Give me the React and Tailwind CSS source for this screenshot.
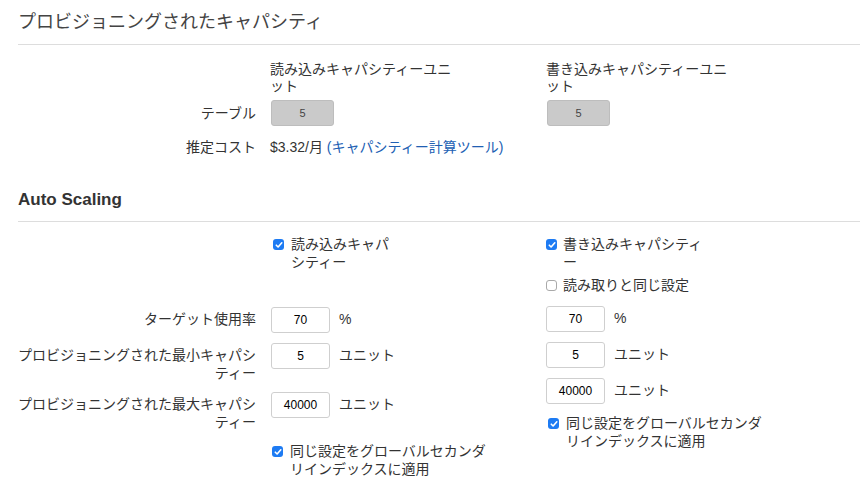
import React from 'react';

const font = { fontFamily: '"Liberation Sans", "Noto Sans CJK JP", sans-serif' };

function Check({ checked }) {
  return checked ? (
    <span className="mt-[4px] flex h-[11px] w-[11px] shrink-0 items-center justify-center rounded-[3px] bg-[#1d7bf3]">
      <svg width="8" height="8" viewBox="0 0 8 8" fill="none">
        <path d="M1.3 4.2 3.1 6 6.8 1.8" stroke="#fff" strokeWidth="1.6" strokeLinecap="round" strokeLinejoin="round" />
      </svg>
    </span>
  ) : (
    <span className="mt-[4px] h-[11px] w-[11px] shrink-0 rounded-[3px] border border-[#a9a9a9] bg-white" />
  );
}

function CheckRow({ checked, width, gap = 'gap-[7px]', children }) {
  return (
    <div className={`flex items-start ${gap}`}>
      <Check checked={checked} />
      <span className={`${width} leading-[18px]`}>{children}</span>
    </div>
  );
}

function NumInput({ value }) {
  return (
    <div className="flex h-[26px] w-[59px] items-center justify-center rounded-[3px] border border-[#cfcfcf] bg-white text-[12px] text-black">
      {value}
    </div>
  );
}

function DisabledInput({ value }) {
  return (
    <div className="flex h-[26px] w-[63px] items-center justify-center rounded-[3px] border border-[#bdbdbd] bg-[#cacaca] text-[11px] text-[#444]">
      {value}
    </div>
  );
}

function Label({ children }) {
  return <div className="w-[238px] shrink-0 pt-[3px] text-right leading-[18px]">{children}</div>;
}

export default function App() {
  return (
    <div className="min-h-[486px] bg-white pl-[18px] pr-[4px] text-[14px] text-[#333]" style={font}>
      {/* Provisioned capacity */}
      <h2 className="border-b border-[#dddddd] pt-[10px] pb-[10px] text-[18px] leading-[24px] text-[#444]">
        プロビジョニングされたキャパシティ
      </h2>

      <div className="flex pt-[16px] leading-[17px]">
        <div className="w-[252px] shrink-0" />
        <div className="w-[276px] shrink-0">
          <div className="w-[190px]">読み込みキャパシティーユニット</div>
        </div>
        <div className="w-[190px]">書き込みキャパシティーユニット</div>
      </div>

      <div className="mt-[5px] flex items-center">
        <div className="w-[238px] shrink-0 text-right">テーブル</div>
        <div className="w-[290px] shrink-0 pl-[15px]">
          <DisabledInput value="5" />
        </div>
        <div className="pl-px">
          <DisabledInput value="5" />
        </div>
      </div>

      <div className="mt-[12px] flex leading-[18px]">
        <div className="w-[238px] shrink-0 text-right">推定コスト</div>
        <div className="pl-[14px]">
          $3.32/月 <span className="text-[#2160b3]">(キャパシティー計算ツール)</span>
        </div>
      </div>

      {/* Auto Scaling */}
      <h2 className="mt-[32px] border-b border-[#dddddd] pb-[9px] text-[17px] font-bold leading-[24px] text-[#333]">
        Auto Scaling
      </h2>

      <div className="flex pt-[13px]">
        {/* labels + read column */}
        <div className="w-[528px] shrink-0">
          <div className="flex">
            <div className="w-[255px] shrink-0" />
            <CheckRow checked width="w-[105px]">
              読み込みキャパシティー
            </CheckRow>
          </div>

          <div className="mt-[36px] flex flex-col gap-[10px]">
            <div className="flex items-start gap-[15px]">
              <Label>ターゲット使用率</Label>
              <NumInput value="70" />
              <span className="-ml-[6px] pt-[3px] leading-[18px]">%</span>
            </div>
            <div className="flex items-start gap-[15px]">
              <Label>プロビジョニングされた最小キャパシティー</Label>
              <NumInput value="5" />
              <span className="-ml-[6px] pt-[3px] leading-[18px]">ユニット</span>
            </div>
            <div className="flex items-start gap-[15px]">
              <Label>プロビジョニングされた最大キャパシティー</Label>
              <NumInput value="40000" />
              <span className="-ml-[6px] pt-[3px] leading-[18px]">ユニット</span>
            </div>
            <div className="mt-px flex">
              <div className="w-[254px] shrink-0" />
              <CheckRow checked width="w-[203px]">
                同じ設定をグローバルセカンダリインデックスに適用
              </CheckRow>
            </div>
          </div>
        </div>

        {/* write column */}
        <div className="flex flex-col">
          <CheckRow checked width="w-[147px]" gap="gap-[6px]">
            書き込みキャパシティー
          </CheckRow>
          <div className="mt-[5px]">
            <CheckRow width="w-[200px]" gap="gap-[6px]">
              読み取りと同じ設定
            </CheckRow>
          </div>
          <div className="mt-[12px] flex flex-col gap-[10px]">
            <div className="flex items-start gap-[9px]">
              <NumInput value="70" />
              <span className="pt-[3px] leading-[18px]">%</span>
            </div>
            <div className="flex items-start gap-[9px]">
              <NumInput value="5" />
              <span className="pt-[3px] leading-[18px]">ユニット</span>
            </div>
            <div className="flex items-start gap-[9px]">
              <NumInput value="40000" />
              <span className="pt-[3px] leading-[18px]">ユニット</span>
            </div>
            <div className="pl-[2px]">
              <CheckRow checked width="w-[203px]">
                同じ設定をグローバルセカンダリインデックスに適用
              </CheckRow>
            </div>
          </div>
        </div>
      </div>
    </div>
  );
}
